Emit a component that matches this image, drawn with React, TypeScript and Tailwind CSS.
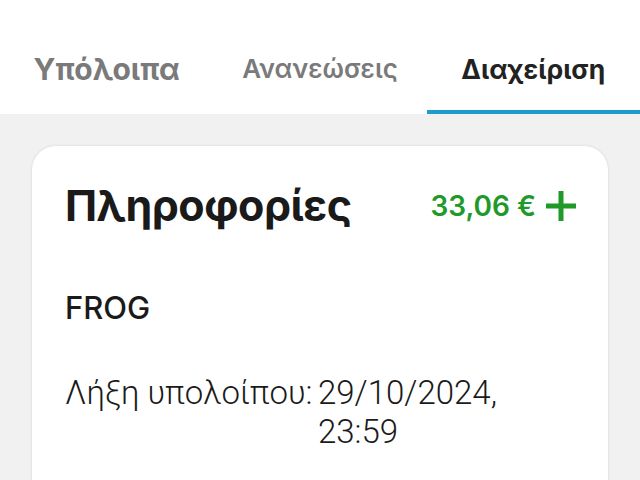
export default function App() {
  return (
    <div className="w-[640px] h-[480px] overflow-hidden bg-[#f1f1f1]" style={{ fontFamily: "Roboto, 'Noto Sans', sans-serif" }}>
      <div className="h-[114px] bg-white grid grid-cols-3" style={{ fontFamily: "Inter, Roboto, sans-serif" }}>
        <div className="flex items-center justify-center pt-[38px] pb-[14px]">
          <span className="text-[30px] font-bold text-[#7a7a7a] leading-none">Υπόλοιπα</span>
        </div>
        <div className="flex items-center justify-center pt-[38px] pb-[14px]">
          <span className="text-[26px] font-semibold text-[#7a7a7a] leading-none">Ανανεώσεις</span>
        </div>
        <div className="flex flex-col">
          <div className="flex-1 flex items-center justify-center pt-[38px] pb-[10px]">
            <span className="text-[26.5px] font-bold text-[#222222] leading-none">Διαχείριση</span>
          </div>
          <div className="h-[4px] bg-[#1e9cc9]" />
        </div>
      </div>
      <div className="mx-[32px] mt-[32px] bg-white rounded-[24px] shadow-[0_0_3px_rgba(0,0,0,0.12)] h-[400px] pl-[33px] pr-[30px] pt-[38px]">
        <div className="flex items-center justify-between" style={{ fontFamily: "Inter, Roboto, sans-serif" }}>
          <span className="text-[43px] font-bold text-[#1a1a1a] leading-none tracking-[-0.5px]">Πληροφορίες</span>
          <div className="flex items-center gap-[8px] text-[#1f9a2a]">
            <span className="text-[28px] font-semibold leading-none">33,06 €</span>
            <svg width="34" height="34" viewBox="0 0 34 34">
              <path d="M17 2v30M2 17h30" stroke="#1f9a2a" strokeWidth="5" fill="none" />
            </svg>
          </div>
        </div>
        <div className="mt-[65px] text-[31px] font-medium text-[#1a1a1a] leading-none" style={{ fontFamily: "Inter, Roboto, sans-serif" }}>FROG</div>
        <div className="mt-[50px] flex text-[33px] text-[#1a1a1a] leading-[39px] font-light">
          <span className="w-[253px]">Λήξη υπολοίπου:</span>
          <span>29/10/2024,<br />23:59</span>
        </div>
      </div>
    </div>
  );
}
